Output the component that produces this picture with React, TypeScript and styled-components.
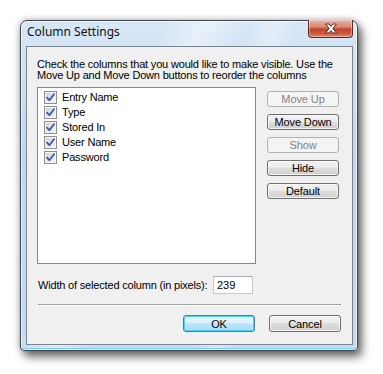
import React from 'react';
import styled, { createGlobalStyle, css } from 'styled-components';

const GlobalStyle = createGlobalStyle`
  html, body {
    margin: 0;
    padding: 0;
    background: #ffffff;
  }

  * {
    box-sizing: border-box;
  }
`;

const columns = ['Entry Name', 'Type', 'Stored In', 'User Name', 'Password'];

const sideButtons = [
  { label: 'Move Up', disabled: true },
  { label: 'Move Down', disabled: false },
  { label: 'Show', disabled: true },
  { label: 'Hide', disabled: false },
  { label: 'Default', disabled: false },
];

function CheckMark() {
  return (
    <svg width="9" height="9" viewBox="0 0 9 9">
      <path
        d="M1 4.6 L3.4 7.2 L8 1.2"
        fill="none"
        stroke="#3d55a5"
        strokeWidth="1.8"
        strokeLinecap="round"
        strokeLinejoin="round"
      />
    </svg>
  );
}

function CloseGlyph() {
  return (
    <svg width="14" height="11" viewBox="0 0 14 11">
      <path
        d="M1.5 1 H5 L7 3.4 L9 1 H12.5 L8.8 5.5 L12.5 10 H9 L7 7.6 L5 10 H1.5 L5.2 5.5 Z"
        fill="#ffffff"
        stroke="#5a2a22"
        strokeWidth="1"
        strokeLinejoin="round"
      />
    </svg>
  );
}

function App() {
  return (
    <>
      <GlobalStyle />
      <Stage>
        <Window>
          <TitleBar>
            <Title>Column Settings</Title>
            <CloseButton aria-label="Close">
              <CloseGlyph />
            </CloseButton>
          </TitleBar>
          <Client>
            <Intro>
              Check the columns that you would like to make visible. Use the
              <br />
              Move Up and Move Down buttons to reorder the columns
            </Intro>

            <MainRow>
              <ColumnList>
                {columns.map((name) => (
                  <ColumnRow key={name}>
                    <CheckBox>
                      <CheckMark />
                    </CheckBox>
                    <span>{name}</span>
                  </ColumnRow>
                ))}
              </ColumnList>

              <ButtonStack>
                {sideButtons.map((b) => (
                  <PushButton key={b.label} disabled={b.disabled}>
                    {b.label}
                  </PushButton>
                ))}
              </ButtonStack>
            </MainRow>

            <WidthRow>
              <WidthLabel>Width of selected column (in pixels):</WidthLabel>
              <WidthInput defaultValue="239" />
            </WidthRow>

            <Separator />

            <Footer>
              <PushButton $tall $primary>
                OK
              </PushButton>
              <PushButton $tall>Cancel</PushButton>
            </Footer>
          </Client>
        </Window>
      </Stage>
    </>
  );
}

export default App;

const Stage = styled.div`
  width: 383px;
  height: 374px;
  padding: 20px 0 0 20px;
  background: #ffffff;
`;

const Window = styled.div`
  display: flex;
  flex-direction: column;

  width: 338px;
  height: 331px;
  padding: 0 4px 5px 5px;

  border: 1px solid #3c4650;
  border-radius: 7px 7px 4px 4px;
  background:
    linear-gradient(115deg, transparent 0 30%, rgba(255, 255, 255, 0.45) 38%, transparent 46%),
    linear-gradient(100deg, transparent 0 58%, rgba(255, 255, 255, 0.35) 64%, transparent 70%),
    linear-gradient(180deg, #d8e7f6 0%, #bfd6ee 40%, #c6dbf0 100%);
  box-shadow:
    inset 0 0 0 1px rgba(255, 255, 255, 0.7),
    inset 0 -2px 0 #7fd0f0,
    4px 6px 10px rgba(0, 0, 0, 0.55),
    0 0 7px rgba(0, 0, 0, 0.3);
`;

const TitleBar = styled.div`
  display: flex;
  justify-content: space-between;
  align-items: flex-start;
  height: 25px;
  padding-left: 1px;
`;

const Title = styled.span`
  margin-top: 3px;

  font-family: 'Noto Sans', 'Open Sans', sans-serif;
  font-size: 12px;
  line-height: 16px;
  color: #101010;
`;

const CloseButton = styled.button`
  display: flex;
  justify-content: center;
  align-items: center;

  width: 45px;
  height: 18px;
  margin-top: -1px;
  padding: 0;

  border: 1px solid #5b2a22;
  border-top: none;
  border-radius: 0 0 4px 4px;
  background: linear-gradient(
    180deg,
    #e8b3a6 0%,
    #d98a76 40%,
    #c3432b 55%,
    #cd5a40 80%,
    #e08a6c 100%
  );
  box-shadow: inset 0 0 0 1px rgba(255, 255, 255, 0.35);
`;

const Client = styled.div`
  display: flex;
  flex-direction: column;
  flex: 1;

  padding: 12px 11px 0 10px;

  border: 1px solid #7a8594;
  background: #f0f0f0;

  font-family: 'Liberation Sans', Arial, sans-serif;
  font-size: 11px;
  letter-spacing: -0.18px;
  color: #000000;
`;

const Intro = styled.p`
  margin: 0;
  line-height: 11px;
  white-space: nowrap;
`;

const MainRow = styled.div`
  display: flex;
  align-items: flex-start;
  gap: 11px;
  margin-top: 6px;
`;

const ColumnList = styled.div`
  display: flex;
  flex-direction: column;

  width: 219px;
  height: 177px;
  padding: 2px 0 0 6px;

  border: 1px solid #828790;
  background: #ffffff;
`;

const ColumnRow = styled.div`
  display: flex;
  align-items: center;
  gap: 5px;
  height: 15px;
  line-height: 15px;
`;

const CheckBox = styled.span`
  display: flex;
  justify-content: center;
  align-items: center;

  width: 13px;
  height: 13px;

  border: 1px solid #8e8f8f;
  background: linear-gradient(135deg, #cbcfd5 0%, #e6e8eb 60%, #f4f4f4 100%);
  box-shadow: inset 0 0 0 1px #f4f4f4;
`;

const ButtonStack = styled.div`
  display: flex;
  flex-direction: column;
  gap: 7px;
  padding-top: 4px;
`;

const PushButton = styled.button<{ $tall?: boolean; $primary?: boolean }>`
  width: 72px;
  height: ${({ $tall }) => ($tall ? '17px' : '16px')};
  padding: 0;

  border: 1px solid #707070;
  border-radius: 3px;
  background: linear-gradient(180deg, #f2f2f2 0%, #ebebeb 49%, #dddddd 50%, #cfcfcf 100%);
  box-shadow: inset 0 0 0 1px rgba(255, 255, 255, 0.75);

  font-family: 'Liberation Sans', Arial, sans-serif;
  font-size: 11px;
  letter-spacing: -0.1px;
  line-height: 14px;
  color: #000000;

  ${({ $primary }) =>
    $primary &&
    css`
      border-color: #3c7fb1;
      background: linear-gradient(180deg, #eaf6fd 0%, #d9f0fc 49%, #bee6fd 50%, #a7d9f5 100%);
      box-shadow: inset 0 0 0 1px #48d6fb;
    `}

  &:disabled {
    border-color: #adb2b5;
    background: #f4f4f4;
    box-shadow: none;
    color: #838383;
  }
`;

const WidthRow = styled.div`
  display: flex;
  align-items: center;
  margin-top: 12px;
  padding-left: 1px;
`;

const WidthLabel = styled.span`
  width: 175px;
  white-space: nowrap;
`;

const WidthInput = styled.input`
  width: 40px;
  height: 18px;
  padding: 0 3px;

  border: 1px solid #c5c8cc;
  border-top-color: #abadb3;
  background: #ffffff;

  font-family: 'Liberation Sans', Arial, sans-serif;
  font-size: 11px;
  color: #000000;
  outline: none;
`;

const Separator = styled.hr`
  width: 303px;
  margin: 10px 0 0 1px;
  height: 2px;

  border: none;
  border-top: 1px solid #a0a0a0;
  border-bottom: 1px solid #ffffff;
`;

const Footer = styled.div`
  display: flex;
  justify-content: flex-end;
  gap: 14px;
  margin-top: 9px;
`;
